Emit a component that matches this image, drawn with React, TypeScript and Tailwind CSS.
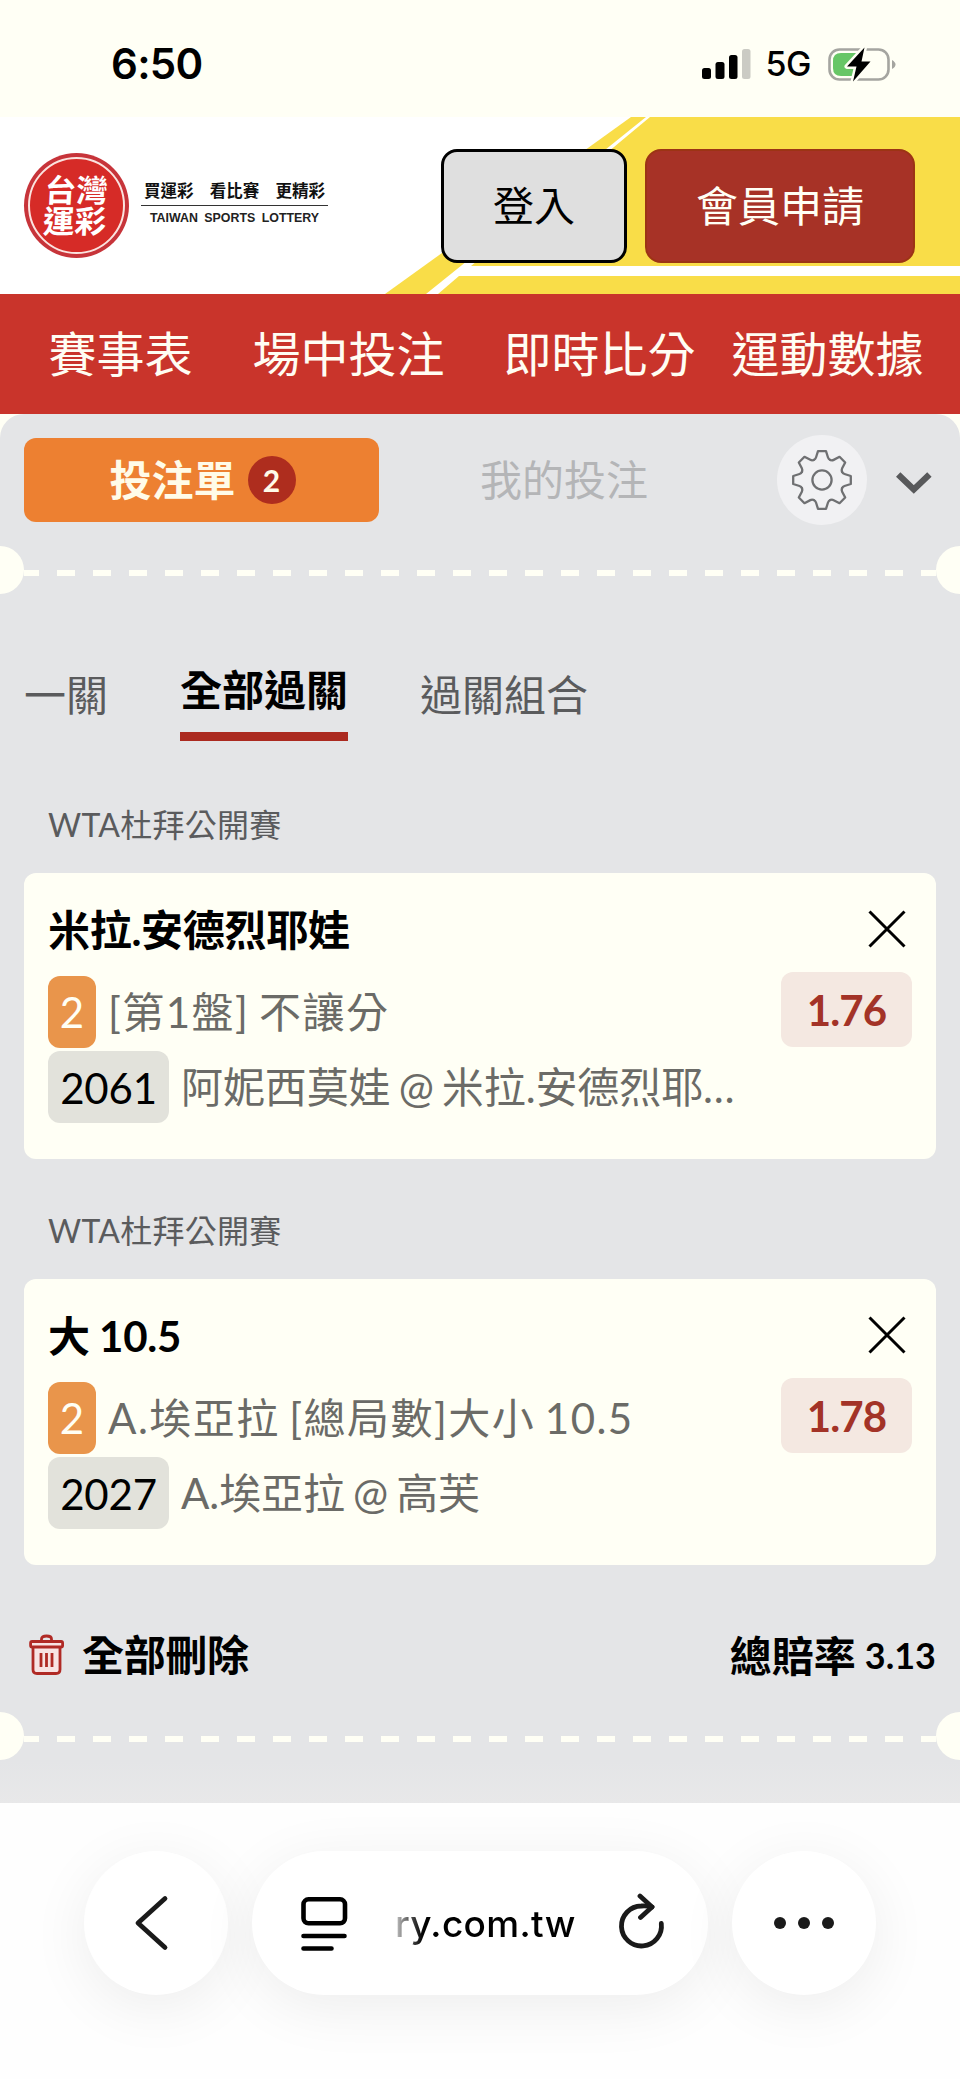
import React from 'react';

interface Pick {
  league: string;
  title: string;
  market: string;
  code: string;
  match: string;
  odds: string;
}

const NAV_ITEMS = [
  { label: '賽事表', className: 'ml-[48.5px]' },
  { label: '場中投注', className: 'ml-[60px]' },
  { label: '即時比分', className: 'ml-[59px]' },
  { label: '運動數據', className: 'ml-[36px]' },
];

const PICKS: Pick[] = [
  {
    league: 'WTA杜拜公開賽',
    title: '米拉.安德烈耶娃',
    market: '[第1盤] 不讓分',
    code: '2061',
    match: '阿妮西莫娃 @ 米拉.安德烈耶…',
    odds: '1.76',
  },
  {
    league: 'WTA杜拜公開賽',
    title: '大 10.5',
    market: 'A.埃亞拉 [總局數]大小 10.5',
    code: '2027',
    match: 'A.埃亞拉 @ 高芙',
    odds: '1.78',
  },
];

const StatusBar: React.FC = () => (
  <div className="flex h-[117px] items-center bg-[#fffff5] pt-[10px] pr-[64px] pl-[111px] font-['Inter',sans-serif] leading-none text-black">
    <span className="text-[42px] font-semibold tracking-[-0.7px]">6:50</span>
    <svg className="ml-auto" width="49" height="32" viewBox="0 0 49 32">
      <rect x="0" y="20" width="9" height="11" rx="2.5" />
      <rect x="13.5" y="14" width="9" height="17" rx="2.5" />
      <rect x="27" y="7" width="8.5" height="24" rx="2.5" />
      <rect x="40" y="1" width="8.5" height="30" rx="2.5" fill="#cbcbc4" />
    </svg>
    <span className="ml-[15px] text-[34px] font-medium tracking-[-0.5px]">5G</span>
    <svg className="ml-[17px]" width="68" height="36" viewBox="0 0 68 36">
      <rect x="1.5" y="3.5" width="59" height="30" rx="10" fill="none" stroke="#a5a5a0" strokeWidth="2.6" />
      <path d="M13 7 H33 V30 H13 Q5 30 5 22 V15 Q5 7 13 7Z" fill="#67c666" />
      <path d="M64 14 Q67.5 16 67.5 18.5 Q67.5 21 64 23Z" fill="#a5a5a0" />
      <path d="M36.5 1.5 L19 20.5 H28.5 L25 35.5 L42.5 15.5 H33.5Z" fill="#000" stroke="#fffff5" strokeWidth="5" paintOrder="stroke" strokeLinejoin="round" />
    </svg>
  </div>
);

const Logo: React.FC = () => (
  <div className="flex items-center">
    <div className="flex h-[105px] w-[105px] items-center justify-center rounded-full bg-[#c7343a] p-[4px]">
      <div className="flex h-full w-full items-center justify-center rounded-full border-2 border-[#fbe3df] bg-[#d62b27]">
        <div className="-skew-x-3 pr-[1px] text-center text-[31.5px] leading-[31px] font-bold text-white">
          <div>台灣</div>
          <div>運彩</div>
        </div>
      </div>
    </div>
    <div className="ml-[12px] flex w-[187px] flex-col pb-[6px]">
      <div className="flex justify-between px-[3px] text-[16.5px] leading-[20px] font-bold text-[#111]">
        <span>買運彩</span>
        <span>看比賽</span>
        <span>更精彩</span>
      </div>
      <div className="mt-[4px] h-px bg-[#333]" />
      <div className="mt-[5px] text-center font-['Liberation_Sans',sans-serif] text-[12.4px] leading-[14px] font-bold whitespace-nowrap text-[#222] [word-spacing:3px]">
        TAIWAN SPORTS LOTTERY
      </div>
    </div>
  </div>
);

const Header: React.FC = () => (
  <header className="relative flex h-[177px] items-center bg-white pr-[45px] pl-[24px]">
    {/* Diagonal yellow banner */}
    <svg className="absolute inset-0" width="960" height="177" viewBox="0 0 960 177" fill="#f9dd48">
      <path d="M631 0 H646 L426 177 H385Z" />
      <path d="M650 0 H960 V149 H471Z" />
      <path d="M459 159 H960 V177 H438Z" />
    </svg>
    <div className="relative flex flex-1 items-center">
      <Logo />
      <button className="ml-auto h-[114px] w-[186px] rounded-[16px] border-3 border-black bg-[#dfdfdf] text-[41px] leading-none text-black">
        登入
      </button>
      <button className="ml-[18px] h-[114px] w-[270px] rounded-[16px] border-2 border-[#9c3414] bg-[#a73226] text-[42px] leading-none text-[#fffff5]">
        會員申請
      </button>
    </div>
  </header>
);

const Nav: React.FC = () => (
  <nav className="flex h-[120px] items-center bg-[#c9342b] text-[48px] leading-none whitespace-nowrap text-[#fffdf3]">
    {NAV_ITEMS.map((item) => (
      <a key={item.label} className={item.className}>{item.label}</a>
    ))}
  </nav>
);

const GEAR_ANGLES = [0, 45, 90, 135, 180, 225, 270, 315];

const GearIcon: React.FC = () => (
  <svg width="62" height="62" viewBox="-31 -31 62 62" fill="none" stroke="#6f7072" strokeWidth="2.3" strokeLinecap="round" strokeLinejoin="round">
    {GEAR_ANGLES.map((a) => (
      <path key={a} d="M-8.3 -20 Q-6.6 -20.7 -6 -22.5 L-4 -28.8 H4 L6 -22.5 Q6.6 -20.7 8.3 -20" transform={`rotate(${a})`} />
    ))}
    <circle r="9.6" />
  </svg>
);

const SlipTabs: React.FC = () => (
  <div className="flex h-[132px] items-center pl-[24px] leading-none">
    <button className="flex h-[84px] w-[355px] items-center justify-center rounded-[12px] bg-[#ed8031] pl-[2px] text-[42px] font-bold text-[#fffbe8]">
      投注單
      <span className="ml-[12px] flex h-[48px] w-[48px] items-center justify-center rounded-full bg-[#ae2d1e] text-[30px]">2</span>
    </button>
    <span className="ml-[101px] text-[42px] text-[#b4b5b7]">我的投注</span>
    <span className="ml-[129px] flex h-[90px] w-[90px] items-center justify-center rounded-full bg-[#f1f1f3]">
      <GearIcon />
    </span>
    <svg className="mt-[5px] ml-[28px]" width="38" height="24" viewBox="0 0 38 24" fill="none" stroke="#58595b" strokeWidth="6.3">
      <path d="M3.2 3.5 L18.8 18.5 L34.4 3.5" />
    </svg>
  </div>
);

/* Ticket perforation: a notch on both edges and a dashed line between */
const Perforation: React.FC = () => (
  <div className="flex h-[48px] items-start overflow-hidden">
    <div className="h-[48px] w-[24px] rounded-r-full bg-[#fffff5]" />
    <svg className="mt-[24px]" width="912" height="6" viewBox="24 0 912 6">
      <path d="M21 3 H939" stroke="#fffff5" strokeWidth="6" strokeDasharray="18 18" />
    </svg>
    <div className="h-[48px] w-[24px] rounded-l-full bg-[#fffff5]" />
  </div>
);

const ParlayTabs: React.FC = () => (
  <div className="flex h-[80px] items-start gap-[72px] pl-[24px] text-[42px] leading-none text-[#5a5b5d]">
    <span className="mt-[13px]">一關</span>
    <span className="h-[80px] border-b-9 border-[#ab2a20] pt-[8px] font-bold text-black">全部過關</span>
    <span className="mt-[13px]">過關組合</span>
  </div>
);

const PickCard: React.FC<{ pick: Pick }> = ({ pick }) => (
  <section>
    <h3 className="h-[120px] pt-[56px] pl-[48px] text-[32px] leading-[32px] tracking-[0.25px] text-[#5a5b5d]">{pick.league}</h3>
    <div className="mx-[24px] h-[286px] rounded-[12px] bg-[#fffff5] px-[24px] text-[42px] leading-none whitespace-nowrap text-[#6b6b67] [word-spacing:-2.5px]">
      <div className="flex h-[99px] items-center justify-between pt-[14px] pr-[5px]">
        <span className="font-bold tracking-[-0.3px] text-black [word-spacing:-0.5px]">{pick.title}</span>
        <svg className="-mt-[2px]" width="40" height="40" viewBox="0 0 40 40" stroke="#000" strokeWidth="3">
          <path d="M2.5 2.5 L37.5 37.5 M37.5 2.5 L2.5 37.5" />
        </svg>
      </div>
      <div className="flex h-[75px] items-center">
        <span className="mt-[5px] flex h-[72px] w-[48px] items-center justify-center rounded-[12px] bg-[#e9954b] pb-px text-[#fffff5]">2</span>
        <span className="mt-[4px] ml-[12px] tracking-[1.45px]">{pick.market}</span>
        <span className="ml-auto flex h-[75px] w-[131px] items-center justify-center rounded-[12px] bg-[#f4e8e1] pt-px font-bold tracking-[-0.9px] text-[#a33327]">{pick.odds}</span>
      </div>
      <div className="mt-[4px] flex h-[72px] items-center">
        <span className="flex h-[72px] w-[121px] items-center justify-center rounded-[12px] bg-[#e2e2db] pt-[2px] tracking-[-0.2px] text-black">{pick.code}</span>
        <span className="ml-[12px] tracking-[-0.1px]">{pick.match}</span>
      </div>
    </div>
  </section>
);

const TrashIcon: React.FC = () => (
  <svg width="36" height="42" viewBox="0 0 36 42" fill="none" stroke="#b02a25" strokeWidth="2.8" strokeLinejoin="round">
    <path d="M12.5 7 V5 Q12.5 2 17.5 2 Q22.5 2 22.5 5 V7" />
    <path d="M4 13 V35.500 Q4 39.5 8 39.5 H27 Q31 39.5 31 35.5 V13" fill="#f8e3e3" />
    <rect x="1.6" y="7.5" width="32" height="5.5" rx="1.5" fill="#f8e3e3" />
    <path d="M12 19 V33 M17.5 19 V33 M23 19 V33" />
  </svg>
);

const SlipFooter: React.FC = () => (
  <div className="flex h-[147px] items-center pt-[33px] pr-[24px] pl-[29px] font-bold text-black">
    <TrashIcon />
    <span className="ml-[17px] text-[42px] leading-none tracking-[-0.3px]">全部刪除</span>
    <span className="ml-auto flex items-center pt-[2px] text-[42px] leading-none">
      總賠率
      <span className="mb-[2px] ml-[9px] text-[36px]">3.13</span>
    </span>
  </div>
);

const BrowserBar: React.FC = () => (
  <div className="flex h-[276px] items-start gap-[24px] bg-[#fefefe] px-[84px] pt-[48px]">
    <button className="flex h-[144px] w-[144px] items-center justify-center rounded-full bg-white shadow-[0_12px_60px_rgba(0,0,0,0.07)]">
      <svg className="mr-[10px]" width="36" height="60" viewBox="0 0 36 60" fill="none" stroke="#1a1a1a" strokeWidth="4.8" strokeLinecap="round" strokeLinejoin="round">
        <path d="M32 5.5 L5 30 L32 54.5" />
      </svg>
    </button>
    <div className="flex h-[144px] w-[456px] items-center rounded-full bg-white pl-[48px] shadow-[0_12px_60px_rgba(0,0,0,0.07)]">
      <svg width="48" height="58" viewBox="0 0 48 58" fill="none" stroke="#000" strokeWidth="4.6" strokeLinecap="round">
        <rect x="3.5" y="5.3" width="41.5" height="24" rx="5" />
        <path d="M3.5 42 H44.5 M3.5 54.5 H31.5" />
      </svg>
      <span className="ml-[47px] bg-linear-to-r from-[#c8c8c8] from-0% to-black to-[18%] bg-clip-text pt-[2px] font-['Inter',sans-serif] text-[37px] leading-[48px] font-medium tracking-[0.35px] text-transparent">
        ry.com.tw
      </span>
      <svg className="mr-[41px] ml-auto" width="50" height="60" viewBox="0 0 50 60" fill="none" stroke="#1a1a1a" strokeWidth="4.8" strokeLinecap="round" strokeLinejoin="round">
        <path d="M44.3 30.5 A20 20 0 1 1 24.3 13 Q30 12.5 35 14" />
        <path d="M23 3 L35 14 L23.5 24.5" />
      </svg>
    </div>
    <button className="flex h-[144px] w-[144px] items-center justify-center gap-[12px] rounded-full bg-white shadow-[0_12px_60px_rgba(0,0,0,0.07)]">
      {[0, 1, 2].map((i) => (
        <span key={i} className="h-[12px] w-[12px] rounded-full bg-[#1a1a1a]" />
      ))}
    </button>
  </div>
);

export default function App() {
  return (
    <div className="h-[2079px] w-[960px] overflow-hidden bg-[#fffff5] font-['Lato','Noto_Sans_CJK_TC',sans-serif]">
      <StatusBar />
      <Header />
      <Nav />
      <main className="h-[1389px] rounded-t-[24px] bg-[#e4e5e7]">
        <SlipTabs />
        <Perforation />
        <div className="h-[67px]" />
        <ParlayTabs />
        <div className="pt-[12px]">
          {PICKS.map((pick) => (
            <PickCard key={pick.code} pick={pick} />
          ))}
        </div>
        <SlipFooter />
        <Perforation />
        <div className="h-[43px] bg-linear-to-b from-[#e4e5e7] to-[#e8e8e9]" />
      </main>
      <BrowserBar />
    </div>
  );
}
